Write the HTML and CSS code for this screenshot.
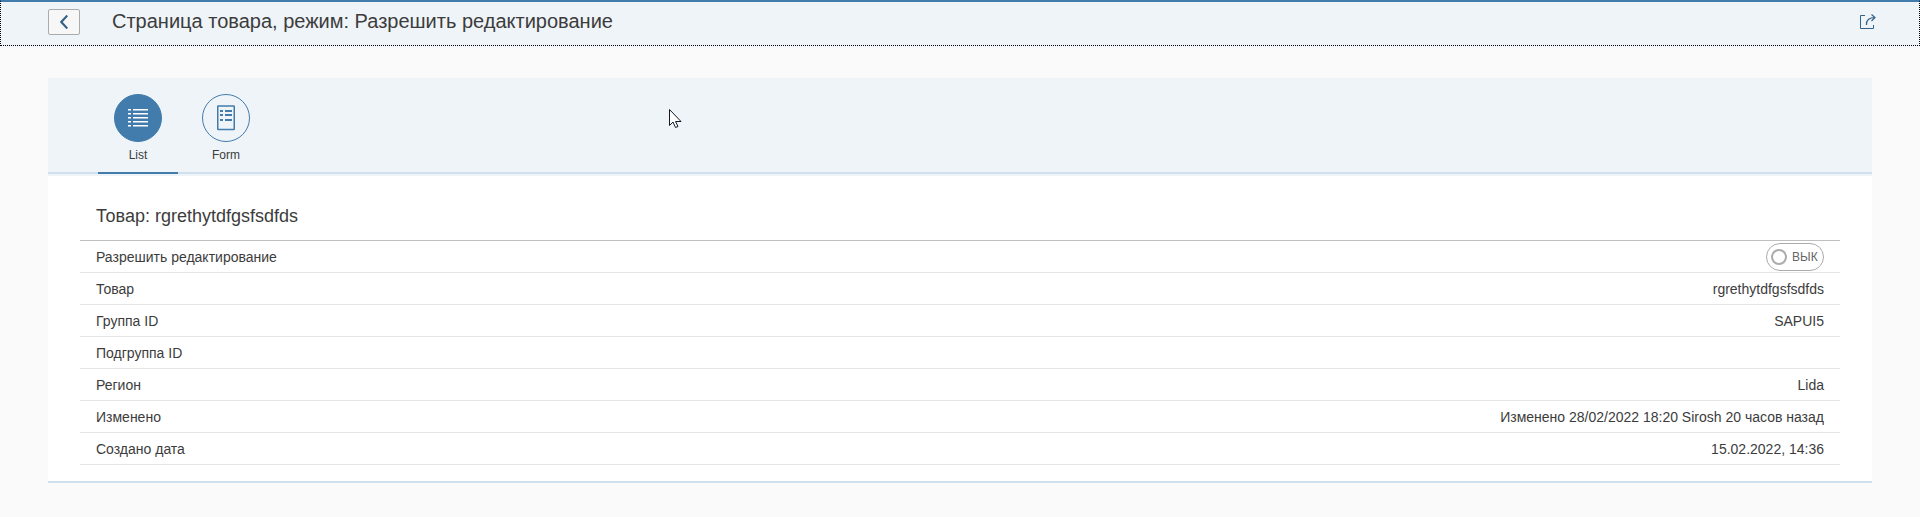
FILE: index.html
```html
<!DOCTYPE html>
<html lang="ru">
<head>
<meta charset="utf-8">
<title>Страница товара</title>
<link rel="stylesheet" href="styles.css">
</head>
<body>
<header class="header">
  <button class="back" aria-label="Назад"><svg width="8" height="14" viewBox="0 0 8 14"><path d="M7.3.5 1.300 7l6 6.500" fill="none" stroke="#346187" stroke-width="2.100"/></svg></button>
  <h1 class="title">Страница товара, режим: Разрешить редактирование</h1>
  <svg class="share" width="18" height="16" viewBox="0 0 18 16" fill="none" stroke="#346187"><path d="M6 1.500H1.500v13h13V11"/><path d="M7.500 11C7 6.500 10 3.500 16 3.500M12.500.5l3.500 3-3.500 3.500" stroke-width="1.200"/></svg>
</header>
<main class="card">
  <nav class="tabs">
    <a class="tab tab-active">
      <span class="circle"><svg width="20" height="18" viewBox="0 0 20 18" fill="#fff"><path d="M0 0h3v1.500H0zM5 0h15v1.500H5zM0 4h3v1.500H0zM5 4h15v1.500H5zM0 8h3v1.500H0zM5 8h15v1.500H5zM0 12h3v1.500H0zM5 12h15v1.500H5zM0 16h3v1.500H0zM5 16h15v1.500H5z"/></svg></span>
      <span class="tab-label">List</span>
    </a>
    <a class="tab">
      <span class="circle"><svg width="18" height="26" viewBox="0 0 18 26" fill="#427cac"><rect x=".75" y="1" width="16.500" height="23.500" rx=".5" fill="none" stroke="#427cac" stroke-width="1.500"/><path d="M3 5h3v2H3zM8 5h7v2H8zM3 9h3v2H3zM8 9h7v2H8zM3 14h3v2H3zM8 14h7v2H8z"/></svg></span>
      <span class="tab-label">Form</span>
    </a>
  </nav>
  <section class="content">
    <h2 class="list-title">Товар: rgrethytdfgsfsdfds</h2>
    <div class="row"><span>Разрешить редактирование</span><span class="switch"><i class="knob"></i>ВЫК</span></div>
    <div class="row"><span>Товар</span><span>rgrethytdfgsfsdfds</span></div>
    <div class="row"><span>Группа ID</span><span>SAPUI5</span></div>
    <div class="row"><span>Подгруппа ID</span><span></span></div>
    <div class="row"><span>Регион</span><span>Lida</span></div>
    <div class="row"><span>Изменено</span><span>Изменено 28/02/2022 18:20 Sirosh 20 часов назад</span></div>
    <div class="row"><span>Создано дата</span><span>15.02.2022, 14:36</span></div>
  </section>
</main>
<svg class="cursor" width="13" height="20" viewBox="0 0 13 20"><path d="M.5.5v16l3.500-3.500 2.500 5.500 2.500-1-2.500-5h5.500z" fill="#fff" stroke="#111827"/></svg>
</body>
</html>
```

FILE: styles.css
```css
* { box-sizing: border-box; }
body {
  margin: 0;
  height: 517px;
  overflow: hidden;
  background: #fafafa;
  color: #3c3c3c;
  font-family: "Liberation Sans", Arial, sans-serif;
  font-size: 14px;
}
.header {
  display: flex;
  align-items: center;
  height: 46px;
  padding: 0 42px 3px 47px;
  background: #eff4f9;
  border: 1px dotted #000;
  border-top: 2px solid #427cac;
  box-shadow: 0 2px 0 #f4f6fb;
}
.back {
  display: flex;
  align-items: center;
  justify-content: center;
  width: 32px;
  height: 26px;
  padding: 0;
  background: #f7f7f7;
  border: 1px solid #ababab;
  border-radius: 2px;
}
.title {
  flex: 1;
  margin: 0 0 2px 32px;
  font-size: 20px;
  line-height: 24px;
  font-weight: 400;
}
.card {
  height: 405px;
  margin: 32px 48px 0;
  background: #fff;
  border-bottom: 2px solid #d1e0ee;
}
.tabs {
  display: flex;
  gap: 8px;
  height: 96px;
  padding-left: 50px;
  background: #eff4f9;
  border-bottom: 2px solid #d1e0ee;
  box-shadow: 0 2px 0 #eff4f9;
}
.tab {
  display: flex;
  flex-direction: column;
  align-items: center;
  width: 80px;
  height: 96px;
  padding-top: 16px;
}
.tab-active { border-bottom: 2px solid #427cac; }
.circle {
  display: flex;
  align-items: center;
  justify-content: center;
  width: 48px;
  height: 48px;
  border: 1px solid #427cac;
  border-radius: 50%;
}
.tab-active .circle { background: #427cac; }
.tab-label {
  margin-top: 5px;
  font-size: 12px;
  line-height: 16px;
}
.content { padding: 18px 32px 0; }
.list-title {
  height: 49px;
  margin: 0;
  padding-left: 16px;
  border-bottom: 1px solid #bfbfbf;
  font-size: 18px;
  line-height: 48px;
  font-weight: 400;
}
.row {
  display: flex;
  align-items: center;
  justify-content: space-between;
  height: 32px;
  padding: 0 16px;
  border-bottom: 1px solid #e5e5e5;
}
.switch {
  display: flex;
  align-items: center;
  gap: 5px;
  width: 58px;
  height: 28px;
  padding-left: 4px;
  border: 1px solid #ababab;
  border-radius: 14px;
  color: #666;
  font-size: 12px;
}
.knob {
  width: 16px;
  height: 16px;
  border: 2px solid #ababab;
  border-radius: 50%;
}
.cursor {
  position: absolute;
  left: 669px;
  top: 109px;
}
```
